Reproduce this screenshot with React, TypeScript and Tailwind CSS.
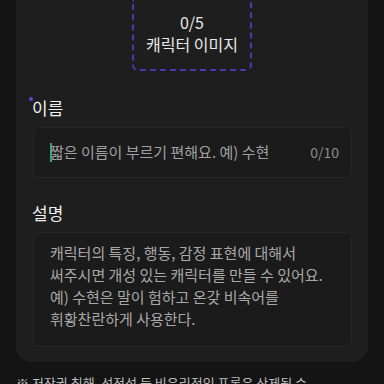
export default function App() {
  return (
    <div
      className="w-[384px] h-[384px] overflow-hidden bg-[#141414] text-white"
      style={{ fontFamily: '"Noto Sans CJK KR", "Noto Sans", sans-serif' }}
    >
      {/* Card */}
      <div className="mx-4 bg-[#1e1e1e] rounded-b-2xl pb-[15px]">
        {/* Image upload */}
        <div className="flex justify-center">
          <div className="w-[120px] h-[71px] border-2 border-t-0 border-dashed border-[#4a38b0] rounded-b-md flex flex-col items-center justify-center pb-1">
            <span className="text-[16px] leading-[22px] text-[#e8e8e8]">0/5</span>
            <span className="text-[16px] leading-[22px] text-[#e8e8e8]">캐릭터 이미지</span>
          </div>
        </div>

        {/* Name */}
        <div className="mt-[25px] px-4">
          <div className="relative">
            <span className="absolute -left-[3px] top-[1px] w-[4px] h-[4px] rounded-full bg-[#5a4ad0]" />
            <span className="text-[17px] leading-[22px] text-[#eeeeee]">이름</span>
          </div>
          <div className="mt-[7px] ml-[1px] h-[51px] rounded-md border border-[#262626] bg-[#1b1b1b] flex items-center px-4">
            <span className="w-[2px] h-[19px] bg-[#3fa07a]" />
            <span className="flex-1 text-[15px] text-[#a0a0a0] -ml-[2px]">짧은 이름이 부르기 편해요. 예) 수현</span>
            <span className="text-[14px] text-[#8c8c8c] mr-[-4px]">0/10</span>
          </div>
        </div>

        {/* Description */}
        <div className="mt-[23px] px-4">
          <span className="text-[17px] leading-[22px] text-[#eeeeee]">설명</span>
          <div className="mt-[7px] ml-[1px] h-[115px] rounded-md border border-[#262626] bg-[#1b1b1b] px-4 pt-[9px]">
            <p className="text-[15px] leading-[22px] text-[#a8a8a8]">
              캐릭터의 특징, 행동, 감정 표현에 대해서
              <br />
              써주시면 개성 있는 캐릭터를 만들 수 있어요.
              <br />
              예) 수현은 말이 험하고 온갖 비속어를
              <br />
              휘황찬란하게 사용한다.
            </p>
          </div>
        </div>
      </div>

      {/* Notice */}
      <p className="mt-[12px] px-4 text-[13px] leading-[18px] text-[#bdbdbd] whitespace-nowrap">
        ※ 저작권 침해, 선정성 등 비윤리적인 프롬은 삭제될 수
      </p>
    </div>
  )
}
